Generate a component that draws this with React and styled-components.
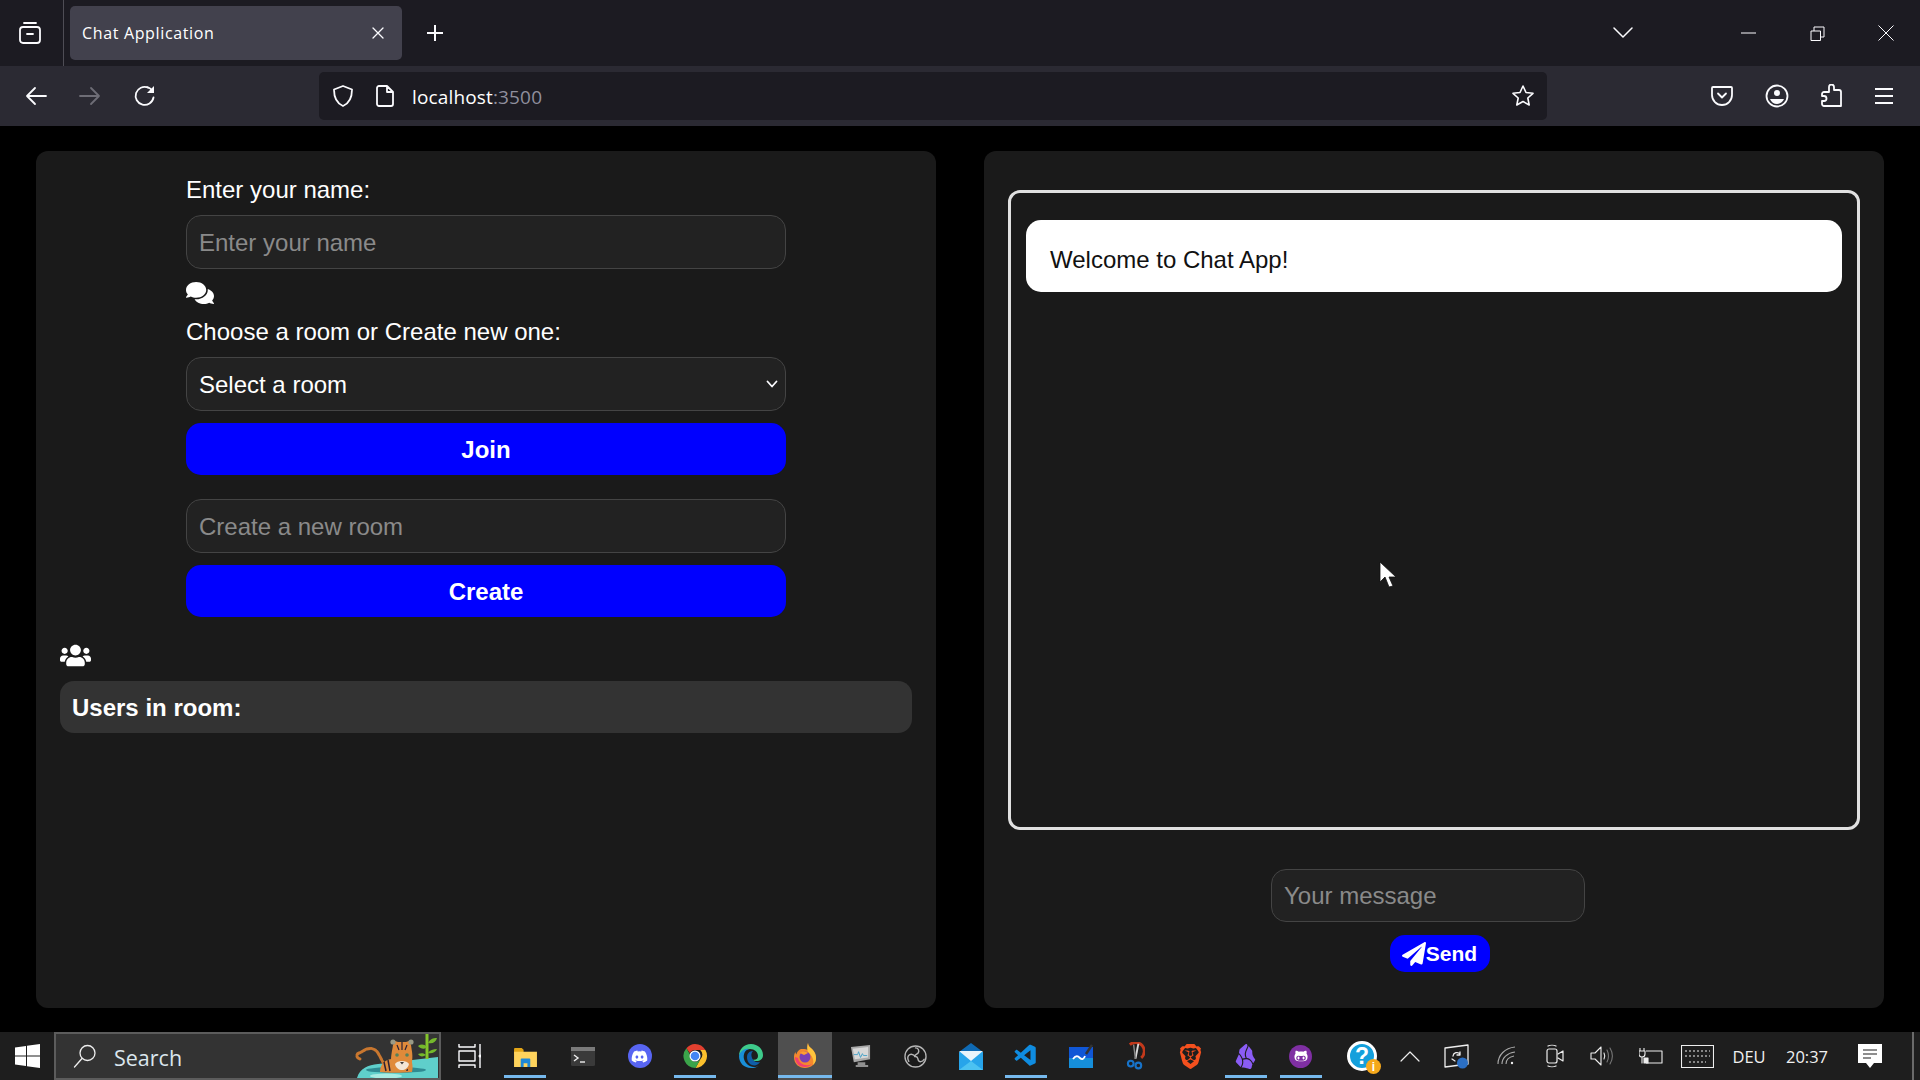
import React from "react";
import styled, { createGlobalStyle } from "styled-components";
import { FaComments, FaUsers, FaPaperPlane, FaDiscord, FaGithubAlt } from "react-icons/fa";
import { SiBrave, SiObsidian } from "react-icons/si";
import { VscVscode } from "react-icons/vsc";

const GlobalStyle = createGlobalStyle`
  html, body {
    margin: 0;
    padding: 0;
    background: #000;
    overflow: hidden;
  }
  * {
    box-sizing: border-box;
  }
`;

const Screen = styled.div`
  width: 1920px;
  height: 1080px;
  display: flex;
  flex-direction: column;
  position: relative;
  font-family: "Liberation Sans", Arial, sans-serif;
  color: #fff;
`;

/* browser chrome */
const TabStrip = styled.div`
  height: 66px;
  flex: none;
  display: flex;
  background: #1c1b22;
  font-family: "Open Sans", "Noto Sans", sans-serif;
`;
const Slot = styled.div`
  width: ${(p) => p.$w}px;
  flex: none;
  display: flex;
  align-items: center;
  justify-content: center;
`;
const ViewSlot = styled(Slot)`
  padding-right: 4px;
  border-right: 1px solid #4e4d55;
`;
const Tab = styled.div`
  width: 332px;
  height: 54px;
  margin: 6px 0 6px 6px;
  padding: 0 16px 0 12px;
  flex: none;
  display: flex;
  align-items: center;
  justify-content: space-between;
  background: #42414d;
  border-radius: 5px;
  font-size: 16px;
  letter-spacing: 0.65px;
`;
const Spacer = styled.div`
  flex: 1;
`;
const ListSlot = styled(Slot)`
  margin-right: 63px;
`;
const Toolbar = styled.div`
  height: 60px;
  flex: none;
  display: flex;
  align-items: center;
  padding: 0 9px;
  background: #2b2a33;
  font-family: "Open Sans", "Noto Sans", sans-serif;
`;
const AddressBar = styled.div`
  width: 1228px;
  height: 48px;
  margin-left: 147px;
  padding: 0 12px;
  flex: none;
  display: flex;
  align-items: center;
  background: #1c1b22;
  border-radius: 5px;
`;
const PageIcon = styled.span`
  display: flex;
  margin-left: 18px;
`;
const Url = styled.div`
  margin-left: 15px;
  padding-top: 2px;
  flex: 1;
  font-size: 19px;
  letter-spacing: 0.15px;
  span {
    color: #8f8f9d;
  }
`;

const Stroke = styled.svg.attrs((p) => ({
  viewBox: p.$box || "0 0 24 24",
  width: p.$w || 24,
  height: p.$h || p.$w || 24,
  fill: "none",
}))`
  flex: none;
  display: block;
  stroke: ${(p) => p.$color || "#fbfbfe"};
  stroke-width: ${(p) => p.$sw || 2};
  stroke-linecap: round;
  stroke-linejoin: round;
`;

/* page */
const Main = styled.main`
  flex: 1;
  display: flex;
  gap: 48px;
  padding: 25px 36px 24px;
  background: #000;
`;
const Panel = styled.section`
  width: 900px;
  height: 857px;
  background: #1a1a1a;
  border-radius: 12px;
`;
const JoinPanel = styled(Panel)`
  padding: 24px;
`;
const ChatPanel = styled(Panel)`
  padding: 39px 24px 0;
  display: flex;
  flex-direction: column;
  align-items: center;
`;
const RoomForm = styled.div`
  width: 600px;
  margin: 0 auto;
  display: flex;
  flex-direction: column;
`;
const Label = styled.label`
  display: block;
  height: 28px;
  line-height: 30px;
  font-size: 24px;
  margin-bottom: ${(p) => p.$mb}px;
`;
const fieldCss = `
  display: block;
  height: 54px;
  padding: 0 12px;
  background: #222;
  border: 1px solid #444;
  border-radius: 15px;
  color: #fff;
  font-family: "Liberation Sans", Arial, sans-serif;
  font-size: 24px;
  outline: none;
`;
const Input = styled.input`
  ${fieldCss}
  width: 100%;
  padding-top: 2px;
  margin-bottom: ${(p) => p.$mb || 0}px;
  &::placeholder {
    color: #8a8a8a;
    opacity: 1;
  }
`;
const MessageInput = styled(Input)`
  width: 314px;
  height: 53px;
  padding-top: 0;
  margin-right: 12px;
`;
const SelectWrap = styled.div`
  position: relative;
  margin-bottom: 12px;
`;
const Select = styled.select`
  ${fieldCss}
  width: 100%;
  appearance: none;
`;
const SelectArrow = styled.span`
  position: absolute;
  right: 8px;
  top: 21px;
  display: flex;
`;
const ActionButton = styled.button`
  width: 100%;
  height: 52px;
  padding: 2px 0 0;
  margin-bottom: ${(p) => p.$mb || 0}px;
  background: #00f;
  border: none;
  border-radius: 15px;
  color: #fff;
  font-family: "Liberation Sans", Arial, sans-serif;
  font-size: 24px;
  font-weight: 700;
`;
const ChatIcon = styled.div`
  height: 21px;
  margin-bottom: 14px;
  display: flex;
  align-items: center;
`;
const UsersIcon = styled.div`
  height: 22px;
  margin: 27px 0 15px 0;
  display: flex;
  align-items: center;
`;
const UsersBar = styled.div`
  height: 52px;
  padding: 2px 12px 0;
  display: flex;
  align-items: center;
  background: #333;
  border-radius: 14px;
  font-size: 24px;
  font-weight: 700;
`;
const MessageBox = styled.div`
  width: 852px;
  height: 640px;
  flex: none;
  padding: 27px 15px;
  margin-bottom: 39px;
  border: 3px solid #e0e0e0;
  border-radius: 12px;
`;
const Bubble = styled.div`
  height: 72px;
  padding: 26px 24px 18px;
  background: #fff;
  border-radius: 15px;
  color: #111;
  font-size: 24px;
  line-height: 28px;
`;
const SendButton = styled.button`
  height: 37px;
  margin: 13px 0 0 12px;
  padding: 0 13px 0 12px;
  display: flex;
  align-items: center;
  background: #00f;
  border: none;
  border-radius: 15px;
  color: #fff;
  font-family: "Liberation Sans", Arial, sans-serif;
  font-size: 21px;
  font-weight: 700;
`;
const Cursor = styled.svg`
  position: absolute;
  left: 1379px;
  top: 561px;
`;

/* windows taskbar */
const Taskbar = styled.footer`
  height: 48px;
  flex: none;
  display: flex;
  align-items: center;
  position: relative;
  background: #1e1e1e;
  font-family: "Open Sans", "Noto Sans", sans-serif;
`;
const TaskSlot = styled.div`
  width: ${(p) => p.$w || 55}px;
  height: 48px;
  flex: none;
  display: flex;
  align-items: center;
  justify-content: center;
  background: ${(p) => (p.$active ? "#4f4f4f" : "transparent")};
  position: relative;
  font-size: 16.5px;
  color: #f0f0f0;
`;
const RunBar = styled.span`
  position: absolute;
  left: 50%;
  bottom: 2px;
  width: ${(p) => (p.$wide ? 54 : 42)}px;
  height: 3px;
  transform: translateX(-50%);
  background: #76b9ed;
`;
const SearchBox = styled.div`
  width: 387px;
  height: 48px;
  flex: none;
  display: flex;
  align-items: center;
  padding-left: 17px;
  background: #333;
  border: 2px solid #5c5c5c;
  overflow: hidden;
  font-size: 21.5px;
  color: #dbe6ee;
`;
const SearchLabel = styled.span`
  margin-left: 17px;
  padding-top: 2px;
  flex: 1;
`;
const Badge = styled.span`
  width: ${(p) => p.$size}px;
  height: ${(p) => p.$size}px;
  display: flex;
  align-items: center;
  justify-content: center;
  background: ${(p) => p.$bg};
  border-radius: 50%;
  color: #fff;
`;
const HelpBadge = styled(Badge)`
  border: 3px solid #fff;
  font-family: "Liberation Sans", Arial, sans-serif;
  font-size: 23px;
  font-weight: 700;
  position: relative;
`;
const InfoDot = styled.span`
  position: absolute;
  right: -7px;
  bottom: -6px;
  width: 15px;
  height: 15px;
  display: flex;
  align-items: center;
  justify-content: center;
  background: #f5a81c;
  border-radius: 50%;
  font-size: 12px;
`;
const EdgeLine = styled.span`
  position: absolute;
  right: 6px;
  top: 0;
  width: 2px;
  height: 48px;
  background: #6a6a6a;
`;

const Tiger = () => (
  <svg viewBox="0 0 87 44" width="87" height="44" style={{ flex: "none" }}>
    <path d="M5 44C8 34 16 31 26 30L86 23V44Z" fill="#5fcfcb" />
    <ellipse cx="34" cy="42" rx="16" ry="2.4" fill="#a8ece3" />
    <ellipse cx="44" cy="36" rx="30" ry="3" fill="#2f8a92" />
    <path d="M8 25c-4-1-4-5-1-6s5-3 8-4 8-1 11 4 4 8 6 11" fill="none" stroke="#c9772f" strokeWidth="3" strokeDasharray="4 1.6" strokeLinecap="round" />
    <path d="M28 38c0-8 6-13 12-13l18-1c3 5 3 10 2 14-10 1-24 1-32 0z" fill="#de8a3c" />
    <path d="M32 28l2 9M36 26l2 11M56 26l-1 11" stroke="#2c2033" strokeWidth="1.5" />
    <path d="M39 28c0-8 1-10 2-17l2-4 3 1h8l3-1 2 4c1 7 2 10 1 17-1 5-5 9-11 9s-10-4-10-9z" fill="#e08a3a" />
    <circle cx="41" cy="8" r="2.6" fill="#9a9a86" />
    <circle cx="59" cy="8" r="2.6" fill="#9a9a86" />
    <path d="M43 30c2-4 12-4 14 0-1 4-4 6-7 6s-6-2-7-6z" fill="#f3e6d6" />
    <circle cx="45" cy="21" r="1.800" fill="#56805a" />
    <circle cx="55" cy="21" r="1.800" fill="#56805a" />
    <path d="M48 28h4l-2 2.500z" fill="#3e3a38" />
    <path d="M50 8v8M45 11l2 5M55 11l-2 5" stroke="#2c2033" strokeWidth="1.200" />
    <path d="M75 0v25" stroke="#84c52b" strokeWidth="3" />
    <path d="M75 13C72 10 69 10 66 12 69 15 72 16 75 13zM76 9c2-4 5-5 9-5-1 4-4 6-9 5zM76 19c2-3 5-4 9-4-1 3-5 5-9 4zM74 21c-2-2-5-2-8-1 2 3 5 3 8 1z" fill="#75b82c" />
  </svg>
);

const Chrome = () => (
  <svg viewBox="0 0 24 24" width="24" height="24">
    <path d="M12 0a12 12 0 0 1 10.400 6H12a6 6 0 0 0-5.200 3L3.400 4.200A12 12 0 0 1 12 0z" fill="#e2402f" />
    <path d="M22.400 6A12 12 0 0 1 12.500 24l5-9a6 6 0 0 0-.300-9z" fill="#fbc02d" />
    <path d="M12.500 24A12 12 0 0 1 3.400 4.200L7 10.500a6 6 0 0 0 5.500 7.500 6 6 0 0 0 5-3z" fill="#3ba44a" />
    <circle cx="12" cy="12" r="5.500" fill="#fff" />
    <circle cx="12" cy="12" r="4.300" fill="#4285f4" />
  </svg>
);

const Edge = () => (
  <svg viewBox="0 0 24 24" width="24" height="24">
    <path d="M12 0c7 0 12 5 12 11 0 4-3 6-6.500 6-2 0-3.500-.5-4.500-1.500 4 1 6-1 6-3.500C19 8 15.500 5 11 5 6 5 2 8 0 12 0 5 5 0 12 0z" fill="#3ecb8b" />
    <path d="M0 12c1-5 6-8 10-7-4 1-6 5-5 10 1 4 5 8 10 8 2 0 4-.5 5-1.500C18 23.500 15 24 12 24 5 24 0 19 0 12z" fill="#1a8fd8" />
    <path d="M8 13c0-3 2-6 6-6-2 2-2 4-1 7 1 3 4 5 8 4-2 3-5 4-8 3-3-1-5-4-5-8z" fill="#0f5ea8" />
  </svg>
);

const Firefox = () => (
  <svg viewBox="0 0 24 26" width="24" height="26">
    <path d="M15 0c0 3 2 4 4 6 3 3 4 6 4 9 0 6-5 10-11 10S1 21 1 14c0-2 .5-4 1.500-5 0 1 .5 2 1 2.500C4 8 7 6 9 6c3 0 5 0 6.500 1.500C15 5 14 3 15 0z" fill="#f5892e" />
    <path d="M15 0c0 3 2 4 4 6 3 3 4 6 4 9 0 3-1 5-3 7 1-4 0-8-3-11-2-2-4-4-2-11z" fill="#ffc53d" />
    <path d="M2 14c0 6 4 10 10 10 3 0 5-1 7-3-6 3-13 0-14-6z" fill="#f33f6e" />
    <circle cx="12" cy="14" r="5.500" fill="#7b3fb4" />
    <path d="M7 10c2-2 6-2 8 0l-4 2z" fill="#ff9f31" />
  </svg>
);

const TaskIcons = () => (
  <>
    <TaskSlot $w={55}>
      <Stroke $w={24} $h={26} $sw={1.400} $box="0 0 24 26">
        <path d="M2 1v3h16V1M2 8h16v10H2zM2 25v-3h16v3M23 1v24" strokeLinecap="butt" />
        <circle cx="23" cy="13" r="0.800" fill="#fff" />
      </Stroke>
    </TaskSlot>
    <TaskSlot $w={58}>
      <svg viewBox="0 0 24 22" width="23" height="21">
        <path d="M0 3a1 1 0 0 1 1-1h7l2 2h0V8H0z" fill="#e3a517" />
        <rect x="0" y="6" width="24" height="16" fill="#ffd35c" />
        <path d="M7 22v-8a1 1 0 0 1 1-1h8a1 1 0 0 1 1 1v8h-3v-4h-4v4z" fill="#1f88d6" />
      </svg>
      <RunBar />
    </TaskSlot>
    <TaskSlot $w={58}>
      <svg viewBox="0 0 24 19" width="24" height="19">
        <rect width="24" height="19" rx="1.500" fill="#3a3a3a" />
        <rect width="24" height="4" fill="#7a7a7a" />
        <path d="M3 8l4 3-4 3" fill="none" stroke="#eee" strokeWidth="1.400" />
        <path d="M9 15h5" stroke="#eee" strokeWidth="1.400" />
      </svg>
    </TaskSlot>
    <TaskSlot>
      <Badge $size={24} $bg="#5865f2">
        <FaDiscord size={17} />
      </Badge>
    </TaskSlot>
    <TaskSlot $w={56}>
      <Chrome />
      <RunBar />
    </TaskSlot>
    <TaskSlot>
      <Edge />
    </TaskSlot>
    <TaskSlot $w={54} $active>
      <Firefox />
      <RunBar $wide />
    </TaskSlot>
    <TaskSlot $w={56}>
      <svg viewBox="0 0 22 24" width="21" height="23">
        <path d="M1 2l20-2v15L4 18z" fill="#a9a9a9" />
        <path d="M3 4l16-2v11L5 15z" fill="#d8d8d8" />
        <path d="M4 10h4l1-3 2 6 2-4 1 2h4" fill="none" stroke="#4aa3c7" strokeWidth="1" />
        <path d="M8 18h8v3h3v2H6v-2h2z" fill="#8f8f8f" />
      </svg>
    </TaskSlot>
    <TaskSlot>
      <Stroke $w={23} $color="#b5b5b5" $sw={1.400}>
        <circle cx="12" cy="12" r="11" fill="#1a1a1a" />
        <path d="M12 3c3 0 4 3 3 5s-4 2-4 4M21 15c-2 3-5 3-6 1s0-4-3-4M5 17c-2-3-1-6 1-7s4 0 6 2" strokeWidth="1.500" />
      </Stroke>
    </TaskSlot>
    <TaskSlot>
      <svg viewBox="0 0 24 27" width="24" height="27">
        <path d="M12 0l12 9H0z" fill="#0f6ab4" />
        <path d="M0 9h24v18H0z" fill="#27a4ea" />
        <path d="M0 8l12 10L24 8v0H0z" fill="#e9f4fb" />
        <path d="M0 27l12-9 12 9z" fill="#4cc2f1" />
      </svg>
    </TaskSlot>
    <TaskSlot>
      <VscVscode size={26} color="#0f8ce0" />
      <RunBar />
    </TaskSlot>
    <TaskSlot>
      <svg viewBox="0 0 24 24" width="24" height="24">
        <rect y="3" width="24" height="21" fill="#1057d6" />
        <path d="M0 14h24v10H0z" fill="#19a6dd" opacity="0.700" />
        <path d="M4 15c3-4 5-3 7-1s4 1 5-2" fill="none" stroke="#fff" strokeWidth="1.800" />
        <path d="M17 10l6-9" stroke="#333" strokeWidth="2.500" />
      </svg>
    </TaskSlot>
    <TaskSlot>
      <svg viewBox="0 0 20 28" width="19" height="28">
        <path d="M4 2a9 9 0 0 1 12 14" fill="none" stroke="#c2391b" strokeWidth="3" />
        <path d="M12 1L9 17h2L14 1z" fill="#d9d9d9" />
        <path d="M8 2l2 15" stroke="#888" strokeWidth="1.500" />
        <circle cx="5" cy="22" r="3" fill="none" stroke="#1773c9" strokeWidth="2.200" />
        <circle cx="13" cy="24" r="3" fill="none" stroke="#1773c9" strokeWidth="2.200" />
      </svg>
    </TaskSlot>
    <TaskSlot>
      <SiBrave size={25} color="#f4501e" />
    </TaskSlot>
    <TaskSlot>
      <SiObsidian size={25} color="#8a5cf5" />
      <RunBar />
    </TaskSlot>
    <TaskSlot>
      <Badge $size={23} $bg="#7f2fa3">
        <FaGithubAlt size={14} />
      </Badge>
      <RunBar />
    </TaskSlot>
  </>
);

const Tray = () => (
  <>
    <TaskSlot $w={7} />
    <TaskSlot $w={54}>
      <HelpBadge $size={30} $bg="#14a0dc">
        ?
        <InfoDot>i</InfoDot>
      </HelpBadge>
    </TaskSlot>
    <TaskSlot $w={42}>
      <Stroke $w={20} $h={11} $box="0 0 20 11" $sw={1.200} $color="#eee">
        <path d="M1 10l9-9 9 9" />
      </Stroke>
    </TaskSlot>
    <TaskSlot $w={52}>
      <Stroke $w={26} $h={26} $box="0 0 26 26" $sw={1.300} $color="#eee">
        <path d="M1 5l23-3v19L1 24z" strokeLinecap="butt" />
        <path d="M9 13a4 4 0 0 1 7-2M8 16l3 2M16 9v3h-3" />
        <circle cx="18.500" cy="20" r="5.500" fill="#2b6fc4" stroke="none" />
      </Stroke>
    </TaskSlot>
    <TaskSlot $w={48}>
      <Stroke $w={20} $h={20} $box="0 0 20 20" $sw={1.100} $color="#aaa">
        <path d="M1 18C1 9 8 2 18 1M5 18c0-6 5-11 13-12M9 18c0-4 3-7 8-8" strokeLinecap="butt" />
        <circle cx="15" cy="17" r="1.200" fill="#eee" stroke="none" />
      </Stroke>
    </TaskSlot>
    <TaskSlot $w={48}>
      <Stroke $w={18} $h={24} $box="0 0 18 24" $sw={1.200} $color="#eee">
        <rect x="1" y="5" width="10" height="14" rx="2" />
        <path d="M12 10l5-3v10l-5-3M2 2c2-1 6-1 8 0M2 22c2 1 6 1 8 0" />
      </Stroke>
    </TaskSlot>
    <TaskSlot $w={46}>
      <Stroke $w={24} $h={22} $box="0 0 24 22" $sw={1.100} $color="#eee">
        <path d="M1 8h4l6-6v18l-6-6H1z" />
        <path d="M14 8c1 2 1 4 0 6" />
        <path d="M17 5c2 4 2 8 0 12M20 3c3 5 3 11 0 16" stroke="#777" />
      </Stroke>
    </TaskSlot>
    <TaskSlot $w={52}>
      <Stroke $w={24} $h={16} $box="0 0 24 16" $sw={1.100} $color="#eee">
        <path d="M7 3h16v12H7" strokeLinecap="butt" />
        <path d="M1 0v3M5 0v3M0 3h6v3a3 3 0 0 1-6 0zM3 9v6" />
        <rect x="5" y="10" width="4" height="5" fill="#eee" />
      </Stroke>
    </TaskSlot>
    <TaskSlot $w={40}>
      <Stroke $w={33} $h={23} $box="0 0 33 23" $sw={1.100} $color="#eee">
        <rect x="0.500" y="0.500" width="32" height="22" strokeLinecap="butt" />
        <path d="M4 6h25M4 11h25M8 17h17" strokeDasharray="2 2" strokeLinecap="butt" />
      </Stroke>
    </TaskSlot>
    <TaskSlot $w={64}>DEU</TaskSlot>
    <TaskSlot $w={52}>20:37</TaskSlot>
    <TaskSlot $w={74}>
      <svg viewBox="0 0 24 24" width="24" height="24">
        <path d="M0 0h24v19h-8l-4 5-4-5H0z" fill="#fff" />
        <path d="M5 6h14M5 10h14M5 14h8" stroke="#1e1e1e" strokeWidth="1.200" />
      </svg>
    </TaskSlot>
  </>
);

export default function App() {
  return (
    <Screen>
      <GlobalStyle />
      <TabStrip>
        <ViewSlot $w={64}>
          <Stroke $w={24} $sw={1.800}>
            <rect x="2" y="6" width="20" height="16" rx="3" />
            <path d="M6 2h12M9 13h6" />
          </Stroke>
        </ViewSlot>
        <Tab>
          Chat Application
          <Stroke $w={16} $box="0 0 16 16" $sw={1.300}>
            <path d="M3 3l10 10M13 3L3 13" />
          </Stroke>
        </Tab>
        <Slot $w={65}>
          <Stroke $w={20} $box="0 0 20 20" $sw={2}>
            <path d="M10 2v16M2 10h16" strokeLinecap="butt" />
          </Stroke>
        </Slot>
        <Spacer />
        <ListSlot $w={56}>
          <Stroke $w={20} $h={12} $box="0 0 20 12" $sw={1.500}>
            <path d="M1 1l9 9 9-9" />
          </Stroke>
        </ListSlot>
        <Slot $w={68.7}>
          <Stroke $w={15} $h={2} $box="0 0 15 2" $sw={1}>
            <path d="M0 1h15" strokeLinecap="butt" />
          </Stroke>
        </Slot>
        <Slot $w={68.7}>
          <Stroke $w={15} $box="0 0 15 15" $sw={1}>
            <path d="M1 5h9.500v9.500H1zM4 5V1h10v10h-3.500" strokeLinecap="butt" strokeLinejoin="miter" />
          </Stroke>
        </Slot>
        <Slot $w={68.6}>
          <Stroke $w={16} $box="0 0 16 16" $sw={1}>
            <path d="M0.500 0.500l15 15M15.500 0.500l-15 15" strokeLinecap="butt" />
          </Stroke>
        </Slot>
      </TabStrip>

      <Toolbar>
        <Slot $w={54}>
          <Stroke $w={22} $box="0 0 22 22" $sw={1.800}>
            <path d="M21 11H2M10 3l-8 8 8 8" />
          </Stroke>
        </Slot>
        <Slot $w={54}>
          <Stroke $w={22} $box="0 0 22 22" $sw={1.800} $color="#6e6d76">
            <path d="M1 11h19M12 3l8 8-8 8" />
          </Stroke>
        </Slot>
        <Slot $w={55}>
          <Stroke $w={24} $sw={1.800}>
            <path d="M20.500 13.500A9 9 0 1 1 15 3.500" />
            <path d="M21 2v7h-7z" fill="#fbfbfe" stroke="none" />
            <path d="M14 3.200c2.500.6 4.500 2 5.500 4" />
          </Stroke>
        </Slot>
        <AddressBar>
          <Stroke $w={24} $sw={1.800}>
            <path d="M12 2l9 3.500c0 8-2 13.500-9 16.500-7-3-9-8.500-9-16.500z" />
          </Stroke>
          <PageIcon>
            <Stroke $w={24} $sw={1.800}>
              <path d="M6 2h8l6 6v12a2 2 0 0 1-2 2H6a2 2 0 0 1-2-2V4a2 2 0 0 1 2-2zM14 2v6h6" />
            </Stroke>
          </PageIcon>
          <Url>
            localhost<span>:3500</span>
          </Url>
          <Stroke $w={24} $sw={1.600}>
            <path d="M12 2l3 6.500 7 .8-5.200 4.700 1.400 7L12 17.500 5.800 21l1.400-7L2 9.300l7-.8z" />
          </Stroke>
        </AddressBar>
        <Spacer />
        <Slot $w={54}>
          <Stroke $w={24} $sw={1.800}>
            <path d="M3 3h18a1 1 0 0 1 1 1v7a10 10 0 0 1-20 0V4a1 1 0 0 1 1-1zM8 9.500l4 4 4-4" />
          </Stroke>
        </Slot>
        <Slot $w={55}>
          <Stroke $w={24} $sw={1.800}>
            <circle cx="12" cy="12" r="10.500" />
            <circle cx="12" cy="9" r="3" fill="#fbfbfe" stroke="none" />
            <path d="M5 15h14c-1 3-4 5-7 5s-6-2-7-5z" fill="#fbfbfe" stroke="none" />
          </Stroke>
        </Slot>
        <Slot $w={53}>
          <Stroke $w={24} $sw={1.800}>
            <path d="M10 3a2.500 2.500 0 0 1 5 0v3h5a2 2 0 0 1 2 2v14H5a2 2 0 0 1-2-2v-3h2a2.500 2.500 0 0 0 0-5H3v-2a2 2 0 0 1 2-2h5z" />
          </Stroke>
        </Slot>
        <Slot $w={54}>
          <Stroke $w={20} $box="0 0 20 20" $sw={1.800}>
            <path d="M1 3h18M1 10h18M1 17h18" strokeLinecap="butt" />
          </Stroke>
        </Slot>
      </Toolbar>

      <Main>
        <JoinPanel>
          <RoomForm>
            <Label $mb={12}>Enter your name:</Label>
            <Input placeholder="Enter your name" $mb={13} />
            <ChatIcon>
              <FaComments size={28} />
            </ChatIcon>
            <Label $mb={12}>Choose a room or Create new one:</Label>
            <SelectWrap>
              <Select defaultValue="">
                <option value="">Select a room</option>
              </Select>
              <SelectArrow>
                <Stroke $w={12} $h={12} $box="0 0 12 12" $sw={1.800}>
                  <path d="M1.500 3.500L6 8.500l4.500-5" />
                </Stroke>
              </SelectArrow>
            </SelectWrap>
            <ActionButton $mb={24}>Join</ActionButton>
            <Input placeholder="Create a new room" $mb={12} />
            <ActionButton>Create</ActionButton>
          </RoomForm>
          <UsersIcon>
            <FaUsers size={31} />
          </UsersIcon>
          <UsersBar>Users in room:</UsersBar>
        </JoinPanel>

        <ChatPanel>
          <MessageBox>
            <Bubble>Welcome to Chat App!</Bubble>
          </MessageBox>
          <MessageInput placeholder="Your message" />
          <SendButton>
            <FaPaperPlane size={24} />
            Send
          </SendButton>
        </ChatPanel>
      </Main>

      <Taskbar>
        <Slot $w={54}>
          <svg viewBox="0 0 25 24" width="25" height="24">
            <path d="M0 3.500l11-1.500v9.500H0zM12 1.800L25 0v11.500H12zM0 12.500h11V22L0 20.500zM12 12.500h13V24l-13-1.800z" fill="#fff" />
          </svg>
        </Slot>
        <SearchBox>
          <Stroke $w={24} $sw={1.300} $color="#eee">
            <circle cx="14.500" cy="9" r="7.500" />
            <path d="M9 14.500L1.500 23" />
          </Stroke>
          <SearchLabel>Search</SearchLabel>
          <Tiger />
        </SearchBox>
        <TaskIcons />
        <Tray />
        <EdgeLine />
      </Taskbar>
      <Cursor viewBox="0 0 18 28" width="18" height="28">
        <path d="M1 1v20l5-5 4 10 4-1-4-9h7z" fill="#fff" stroke="#111" strokeWidth="0.800" />
      </Cursor>
    </Screen>
  );
}
